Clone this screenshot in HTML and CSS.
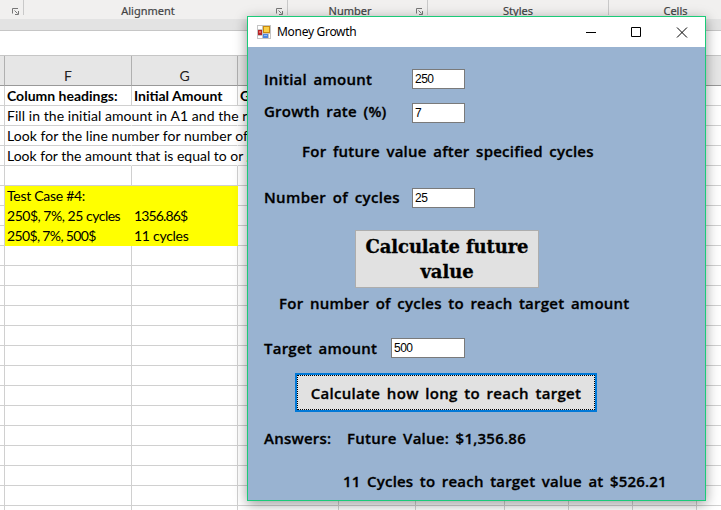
FILE: index.html
```html
<!DOCTYPE html>
<html lang="en">
<head>
<meta charset="utf-8">
<title>Money Growth</title>
<link rel="stylesheet" href="styles.css">
</head>
<body>
<div class="excel">
  <div class="ribbon">
    <div class="group g-font"><svg class="launch" viewBox="0 0 7 7"><path d="M.5 5.500V.5H6M2.500 2.500l3 3M6.500 3v3.500H3"/></svg></div>
    <div class="group g-align"><span>Alignment</span><svg class="launch" viewBox="0 0 7 7"><path d="M.5 5.500V.5H6M2.500 2.500l3 3M6.500 3v3.500H3"/></svg></div>
    <div class="group g-number"><span>Number</span><svg class="launch" viewBox="0 0 7 7"><path d="M.5 5.500V.5H6M2.500 2.500l3 3M6.500 3v3.500H3"/></svg></div>
    <div class="group g-styles"><span>Styles</span></div>
    <div class="group g-cells"><span>Cells</span></div>
  </div>
  <div class="formula-bar"></div>
  <div class="row heads"><div></div><div>F</div><div>G</div><div></div><div></div><div></div><div></div><div></div><div></div><div></div></div>
  <div class="sheet" id="sheet"></div>
</div>

<div class="window">
  <div class="titlebar">
    <svg class="app-icon" viewBox="0 0 14 14"><rect width="14" height="14" fill="#c4c4c4"/><path d="M1 1h4v3H1zM1 11h4v2H1zM12 9h1v4h-1z" fill="#fff"/><rect x="1" y="5" width="4" height="5" fill="#b5252a"/><rect x="2" y="6" width="2" height="2" fill="#e8695c"/><rect x="6.500" y="1.500" width="6" height="6" fill="#fbd045" stroke="#c88a10"/><rect x="6" y="9" width="5" height="4" fill="#4a86e0"/><rect x="7" y="10" width="3" height="1" fill="#8fbcf5"/></svg>
    <h1>Money Growth</h1>
    <svg class="controls" viewBox="0 0 102 11"><path d="M0 5.500h10M45.500.500h9v9h-9zM91 .500l10 10M101 .500l-10 10"/></svg>
  </div>
  <form class="form">
    <div class="field f1"><label class="w-initial">Initial amount</label><input value="250"></div>
    <div class="field f2"><label class="w-growth">Growth rate (%)</label><input value="7"></div>
    <p class="p1"><span>For future value after specified cycles</span></p>
    <div class="field f3"><label class="w-cycles">Number of cycles</label><input class="wide" value="25"></div>
    <button type="button" class="calc">Calculate future value</button>
    <p class="p2"><span>For number of cycles to reach target amount</span></p>
    <div class="field f4"><label class="w-target">Target amount</label><input class="wider" value="500"></div>
    <button type="button" class="focus"><span>Calculate how long to reach target</span></button>
    <div class="field f5"><span class="w-ans">Answers:</span><span class="fv">Future Value: $1,356.86</span></div>
    <p class="p3"><span>11 Cycles to reach target value at $526.21</span></p>
  </form>
</div>
<script src="sheet.js"></script>
</body>
</html>
```
FILE: sheet.js
```js
const rows = [
  { cells: ["Column headings:", "Initial Amount", "Growth"], kind: "bold" },
  { cells: ["Fill in the initial amount in A1 and the rate"], kind: "spill first" },
  { cells: ["Look for the line number for number of cycles"], kind: "spill loose" },
  { cells: ["Look for the amount that is equal to or greater"], kind: "spill" },
  { cells: [] },
  { cells: ["Test Case #4:"], kind: "mark title" },
  { cells: ["250$, 7%, 25 cycles", "1356.86$"], kind: "mark" },
  { cells: ["250$, 7%, 500$", "11 cycles"], kind: "mark last" }
];
while (rows.length < 22) rows.push({ cells: [] });
const sheet = document.getElementById("sheet");
for (const r of rows) {
  const row = document.createElement("div");
  row.className = "row " + (r.kind || "");
  for (let c = 0; c < 10; c++) {
    const cell = document.createElement("div");
    const text = c > 0 && r.cells[c - 1];
    if (text) {
      const s = document.createElement("span");
      s.textContent = text;
      cell.append(s);
    }
    row.append(cell);
  }
  sheet.append(row);
}
```
FILE: styles.css
```css
* { box-sizing: border-box; }
body { margin: 0; width: 721px; height: 510px; overflow: hidden; position: relative; background: #fff; font-family: Lato, "Liberation Sans", sans-serif; color: #000; }
.excel { width: 721px; height: 510px; overflow: hidden; }
.ribbon { display: flex; height: 19px; background: #f1f0ef; font: 11px/14px "Noto Sans", sans-serif; color: #444; padding-bottom: 4px; -webkit-text-stroke: .2px #444; }
.group { flex: none; border-right: 1px solid #c9c9c9; display: flex; justify-content: flex-end; align-items: flex-start; padding-top: 4px; }
.group span { flex: 1; text-align: center; }
.g-align span, .g-number span { padding-right: 4px; }
.launch { width: 7px; height: 7px; margin: 4px 4px 0 0; fill: none; stroke: #777; }
.g-font { width: 24px; }
.g-align { width: 264px; }
.g-number { width: 140px; }
.g-styles { width: 181px; }
.g-cells { width: 134px; }
.formula-bar { height: 26px; margin-top: 11px; border: solid #c6c6c6; border-width: 1px 0; background: #fff; box-shadow: 0 -11px 0 #e3e3e3; }
.row { display: grid; grid-template-columns: 5px 127px 106px 101px 77px 89px 64px 64px 64px 64px; height: 20px; font-size: 14px; line-height: 20px; white-space: nowrap; }
.row > div { height: 20px; border-right: 1px solid #d0d0d0; border-bottom: 1px solid #d0d0d0; padding-left: 2px; min-width: 0; }
.heads { height: 30px; background: #e6e6e6; line-height: 18px; text-align: center; color: #222; }
.heads > div { height: 30px; padding: 11px 0 0; border-right-color: #b0b0b0; border-bottom-color: #999; }
.bold { font-weight: 700; }
.spill > div:nth-child(n+2) { border-right-color: #fff; }
.spill span { position: relative; }
.first { letter-spacing: .06px; }
.loose { letter-spacing: .06px; }
.mark > div:nth-child(2), .mark > div:nth-child(3) { background: #ff0; border-color: #ff0; letter-spacing: -.48px; }
.mark > div:nth-child(3) { letter-spacing: -.85px; }
.mark.title > div:nth-child(2), .mark.last > div:nth-child(3) { letter-spacing: -.28px; }
.mark.last > div:nth-child(2) { letter-spacing: -.65px; }

.window { position: absolute; left: 247px; top: 16px; width: 459px; height: 485px; border: 1px solid #1bcb78; background: #99b3d1; box-shadow: 0 3px 12px rgba(0,0,0,.4); }
.titlebar { height: 30px; background: #fff; display: flex; align-items: center; padding: 0 17px 0 9px; }
.app-icon { width: 14px; height: 14px; }
h1 { font: 12px/16px "Noto Sans", sans-serif; letter-spacing: -.3px; margin: 0 0 0 6px; flex: 1; }
.controls { width: 102px; height: 11px; fill: none; stroke: #000; }
.form { display: flex; flex-direction: column; align-items: flex-start; font: 600 15px/22px "Open Sans", sans-serif; letter-spacing: .24px; word-spacing: 2.4px; -webkit-text-stroke: .3px #000; white-space: nowrap; padding: 21px 0 0 16px; }
.field { display: flex; height: 22px; }
input { width: 53px; height: 20px; border: 1px solid #7a7a7a; background: #fff; padding: 0 2px; font: 12px/18px "Liberation Sans", sans-serif; letter-spacing: -.5px; margin: 1px 0 0; outline: 0; -webkit-text-stroke: 0; }
.wide { width: 63px; }
.wider { width: 74px; }
.w-initial, .w-growth, .w-cycles { width: 148px; }
.w-growth { line-height: 18px; }
.w-target { width: 127px; }
.w-ans { width: 83px; }
p { margin: 0; }
.f2 { margin-top: 12px; }
.p1 { margin: 16px 0 0 38px; }
.f3 { margin-top: 25px; }
.w-cycles { line-height: 20px; letter-spacing: .35px; }
button { border: 1px solid #adadad; background: #e1e1e1; padding: 0; color: #000; border-radius: 0; }
.calc { width: 184px; height: 58px; margin: 21px 0 0 91px; font: 700 18px/25px "DejaVu Serif", serif; letter-spacing: -.1px; white-space: normal; }
.p2 { margin: 4px 0 0 15px; }
.f4 { margin-top: 23px; }
.focus { width: 302px; height: 39px; margin: 14px 0 0 31px; border: 2px solid #0078d7; outline: 1px dotted #000; outline-offset: -3px; font: inherit; letter-spacing: .3px; word-spacing: 2.4px; }
.f5 { margin-top: 15px; }
.p3 { margin: 21px 0 0 79px; letter-spacing: .2px; }
```
